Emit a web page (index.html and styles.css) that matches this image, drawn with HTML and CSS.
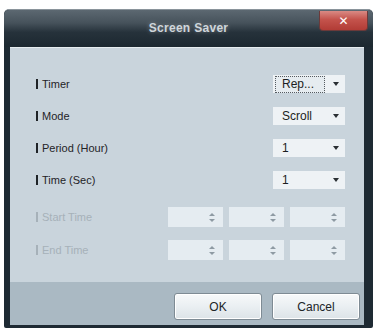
FILE: index.html
```html
<!DOCTYPE html>
<html lang="en">
<head>
    <meta charset="UTF-8">
    <title>Screen Saver</title>
    <link rel="stylesheet" href="styles.css">
</head>
<body>
    <div class="window">
        <div class="titlebar">
            <span class="title">Screen Saver</span>
            <button class="btn-close">&#x2715;</button>
        </div>

        <div class="content">
            <div class="row">
                <span class="label">Timer</span>
                <div class="select">
                    <span class="value focus">Rep...</span>
                    <span class="arrow"></span>
                </div>
            </div>
            <div class="row">
                <span class="label">Mode</span>
                <div class="select">
                    <span class="value">Scroll</span>
                    <span class="arrow"></span>
                </div>
            </div>
            <div class="row">
                <span class="label">Period (Hour)</span>
                <div class="select">
                    <span class="value">1</span>
                    <span class="arrow"></span>
                </div>
            </div>
            <div class="row">
                <span class="label">Time (Sec)</span>
                <div class="select">
                    <span class="value">1</span>
                    <span class="arrow"></span>
                </div>
            </div>

            <div class="row row-time first">
                <span class="label disabled">Start Time</span>
                <div class="spinners">
                    <div class="spin"><span class="spin-btns"><i class="up"></i><i class="down"></i></span></div>
                    <div class="spin"><span class="spin-btns"><i class="up"></i><i class="down"></i></span></div>
                    <div class="spin"><span class="spin-btns"><i class="up"></i><i class="down"></i></span></div>
                </div>
            </div>
            <div class="row row-time">
                <span class="label disabled">End Time</span>
                <div class="spinners">
                    <div class="spin"><span class="spin-btns"><i class="up"></i><i class="down"></i></span></div>
                    <div class="spin"><span class="spin-btns"><i class="up"></i><i class="down"></i></span></div>
                    <div class="spin"><span class="spin-btns"><i class="up"></i><i class="down"></i></span></div>
                </div>
            </div>
        </div>

        <div class="footer">
            <button class="btn">OK</button>
            <button class="btn">Cancel</button>
        </div>
    </div>
</body>
</html>
```

FILE: styles.css
```css
* {
    margin: 0;
    padding: 0;
    box-sizing: border-box;
}

body {
    font-family: 'Liberation Sans', Arial, sans-serif;
    background: #ffffff;
    width: 376px;
    height: 332px;
    overflow: hidden;
}

.window {
    margin: 9px 0 0 4px;
    width: 369px;
    height: 319px;
    background: #1e2a33;
    border-radius: 5px 5px 2px 2px;
    border-top: 1px solid #8a949b;
    padding: 0 9px 3px 6px;
    display: flex;
    flex-direction: column;
}

.titlebar {
    position: relative;
    height: 37px;
    margin: 0 -9px 0 -6px;
    border-radius: 5px 5px 0 0;
    background: linear-gradient(to bottom, #5c6871 0%, #46525b 35%, #26323b 60%, #1c2830 100%);
    display: flex;
    align-items: center;
    justify-content: center;
}

.title {
    color: #cfd6db;
    font-size: 12px;
    font-weight: bold;
    letter-spacing: 0.3px;
    text-shadow: 0 0 4px rgba(255, 255, 255, 0.35);
    margin-top: -1px;
}

.btn-close {
    position: absolute;
    top: 1px;
    right: 5px;
    width: 49px;
    height: 20px;
    border: 1px solid #6b3a3a;
    border-top: none;
    border-radius: 0 0 4px 4px;
    background: linear-gradient(to bottom, #d98a84 0%, #c4534c 45%, #b23c36 100%);
    color: #ffffff;
    font-size: 12px;
    font-weight: bold;
    font-family: 'DejaVu Sans', sans-serif;
    line-height: 18px;
}

.content {
    height: 235px;
    background: #c9d4dc;
    border-top: 1px solid #e6ecf0;
    padding: 26px 19px 0 26px;
    display: flex;
    flex-direction: column;
    gap: 12px;
}

.row {
    height: 20px;
    display: flex;
    align-items: center;
    justify-content: space-between;
}

.row-time.first {
    margin-top: 5px;
}

.row-time {
    margin-top: 1px;
}

.label {
    font-size: 11px;
    color: #1f2327;
    display: flex;
    align-items: center;
}

.label::before {
    content: '';
    width: 2px;
    height: 10px;
    background: #1f2327;
    margin-right: 4px;
}

.label.disabled {
    color: #a6b1b9;
}

.label.disabled::before {
    background: #a6b1b9;
}

.select {
    width: 72px;
    height: 18px;
    background: #eef2f5;
    display: flex;
    align-items: center;
    justify-content: space-between;
    padding: 0 6px 0 2px;
    font-size: 12px;
    color: #1b1e21;
}

.value {
    padding: 0 6px;
    line-height: 15px;
    border: 1px solid transparent;
}

.value.focus {
    width: 50px;
    border: 1px dotted #555b60;
    background: #e6ecf0;
}

.arrow {
    width: 0;
    height: 0;
    border-left: 3px solid transparent;
    border-right: 3px solid transparent;
    border-top: 4px solid #2a2f33;
}

.spinners {
    display: flex;
    gap: 6px;
}

.spin {
    width: 55px;
    height: 20px;
    background: #e5ecf1;
    display: flex;
    justify-content: flex-end;
    align-items: center;
    padding-right: 8px;
}

.spin-btns {
    display: flex;
    flex-direction: column;
    gap: 3px;
}

.spin-btns i {
    display: block;
    width: 0;
    height: 0;
    border-left: 3px solid transparent;
    border-right: 3px solid transparent;
}

.spin-btns .up {
    border-bottom: 3px solid #8e9aa3;
}

.spin-btns .down {
    border-top: 3px solid #8e9aa3;
}

.footer {
    flex: 1;
    background: #aab9c3;
    display: flex;
    justify-content: flex-end;
    gap: 10px;
    padding: 11px 4px 0 0;
}

.btn {
    width: 88px;
    height: 27px;
    border: 1px solid #7e8b94;
    border-radius: 3px;
    background: linear-gradient(to bottom, #f7f9fa 0%, #eaeff2 50%, #dce3e7 100%);
    box-shadow: inset 0 0 0 1px #ffffff;
    font-family: 'Liberation Sans', Arial, sans-serif;
    font-size: 12px;
    color: #202428;
}
```
